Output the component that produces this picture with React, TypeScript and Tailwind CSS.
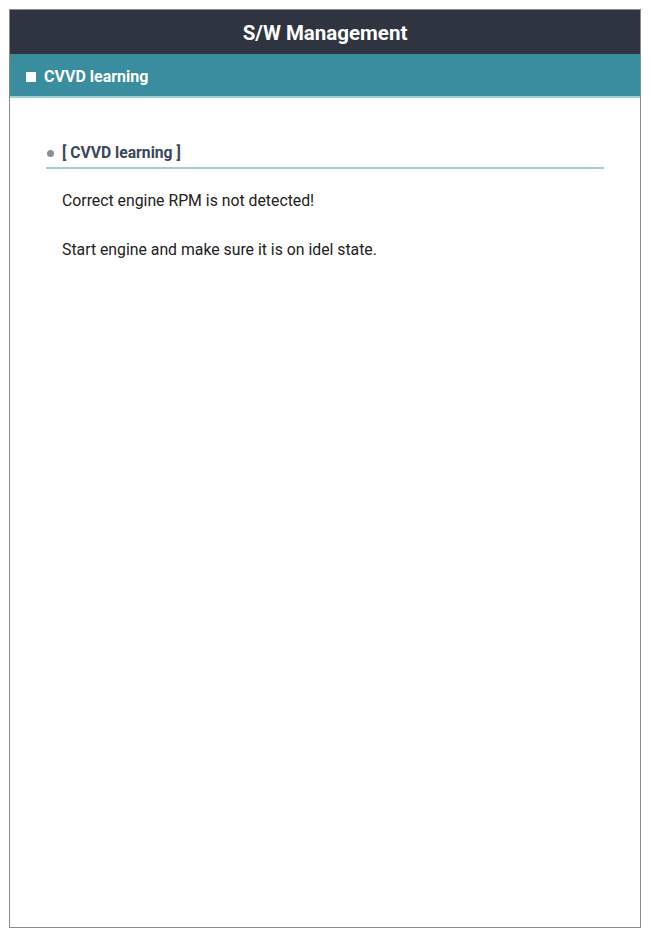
export default function App() {
  return (
    <div className="w-[650px] h-[937px] bg-white pt-[9px] pl-[9px]" style={{ fontFamily: "Roboto, 'Noto Sans', sans-serif" }}>
      <div className="w-[632px] h-[919px] border border-[#8a8a8a] flex flex-col bg-white">
        <div className="h-[44px] bg-[#2e3541] flex items-center justify-center pt-[2px]">
          <span className="text-white font-bold text-[20.5px] leading-none">S/W Management</span>
        </div>
        <div className="h-[44px] bg-[#3a8d9f] border-b-2 border-[#9fd0d8] flex items-center pl-[16px] pt-[3px]">
          <span className="w-[10px] h-[10px] bg-white mr-[8px]"></span>
          <span className="text-white font-bold text-[16px] leading-none">CVVD learning</span>
        </div>
        <div className="px-[36px] pt-[42px]">
          <div className="flex items-center h-[29px] border-b-2 border-[#a6ccd4] pl-[1px] pb-[1px]">
            <span className="w-[7px] h-[7px] rounded-full bg-[#8a8f99] mr-[8px]"></span>
            <span className="text-[#3c475b] font-bold text-[15.7px] leading-none">[ CVVD learning ]</span>
          </div>
          <div className="pl-[16px] pt-[24px] text-[#222] text-[15.8px] leading-none">
            <p>Correct engine RPM is not detected!</p>
            <p className="mt-[33px]">Start engine and make sure it is on idel state.</p>
          </div>
        </div>
      </div>
    </div>
  );
}
